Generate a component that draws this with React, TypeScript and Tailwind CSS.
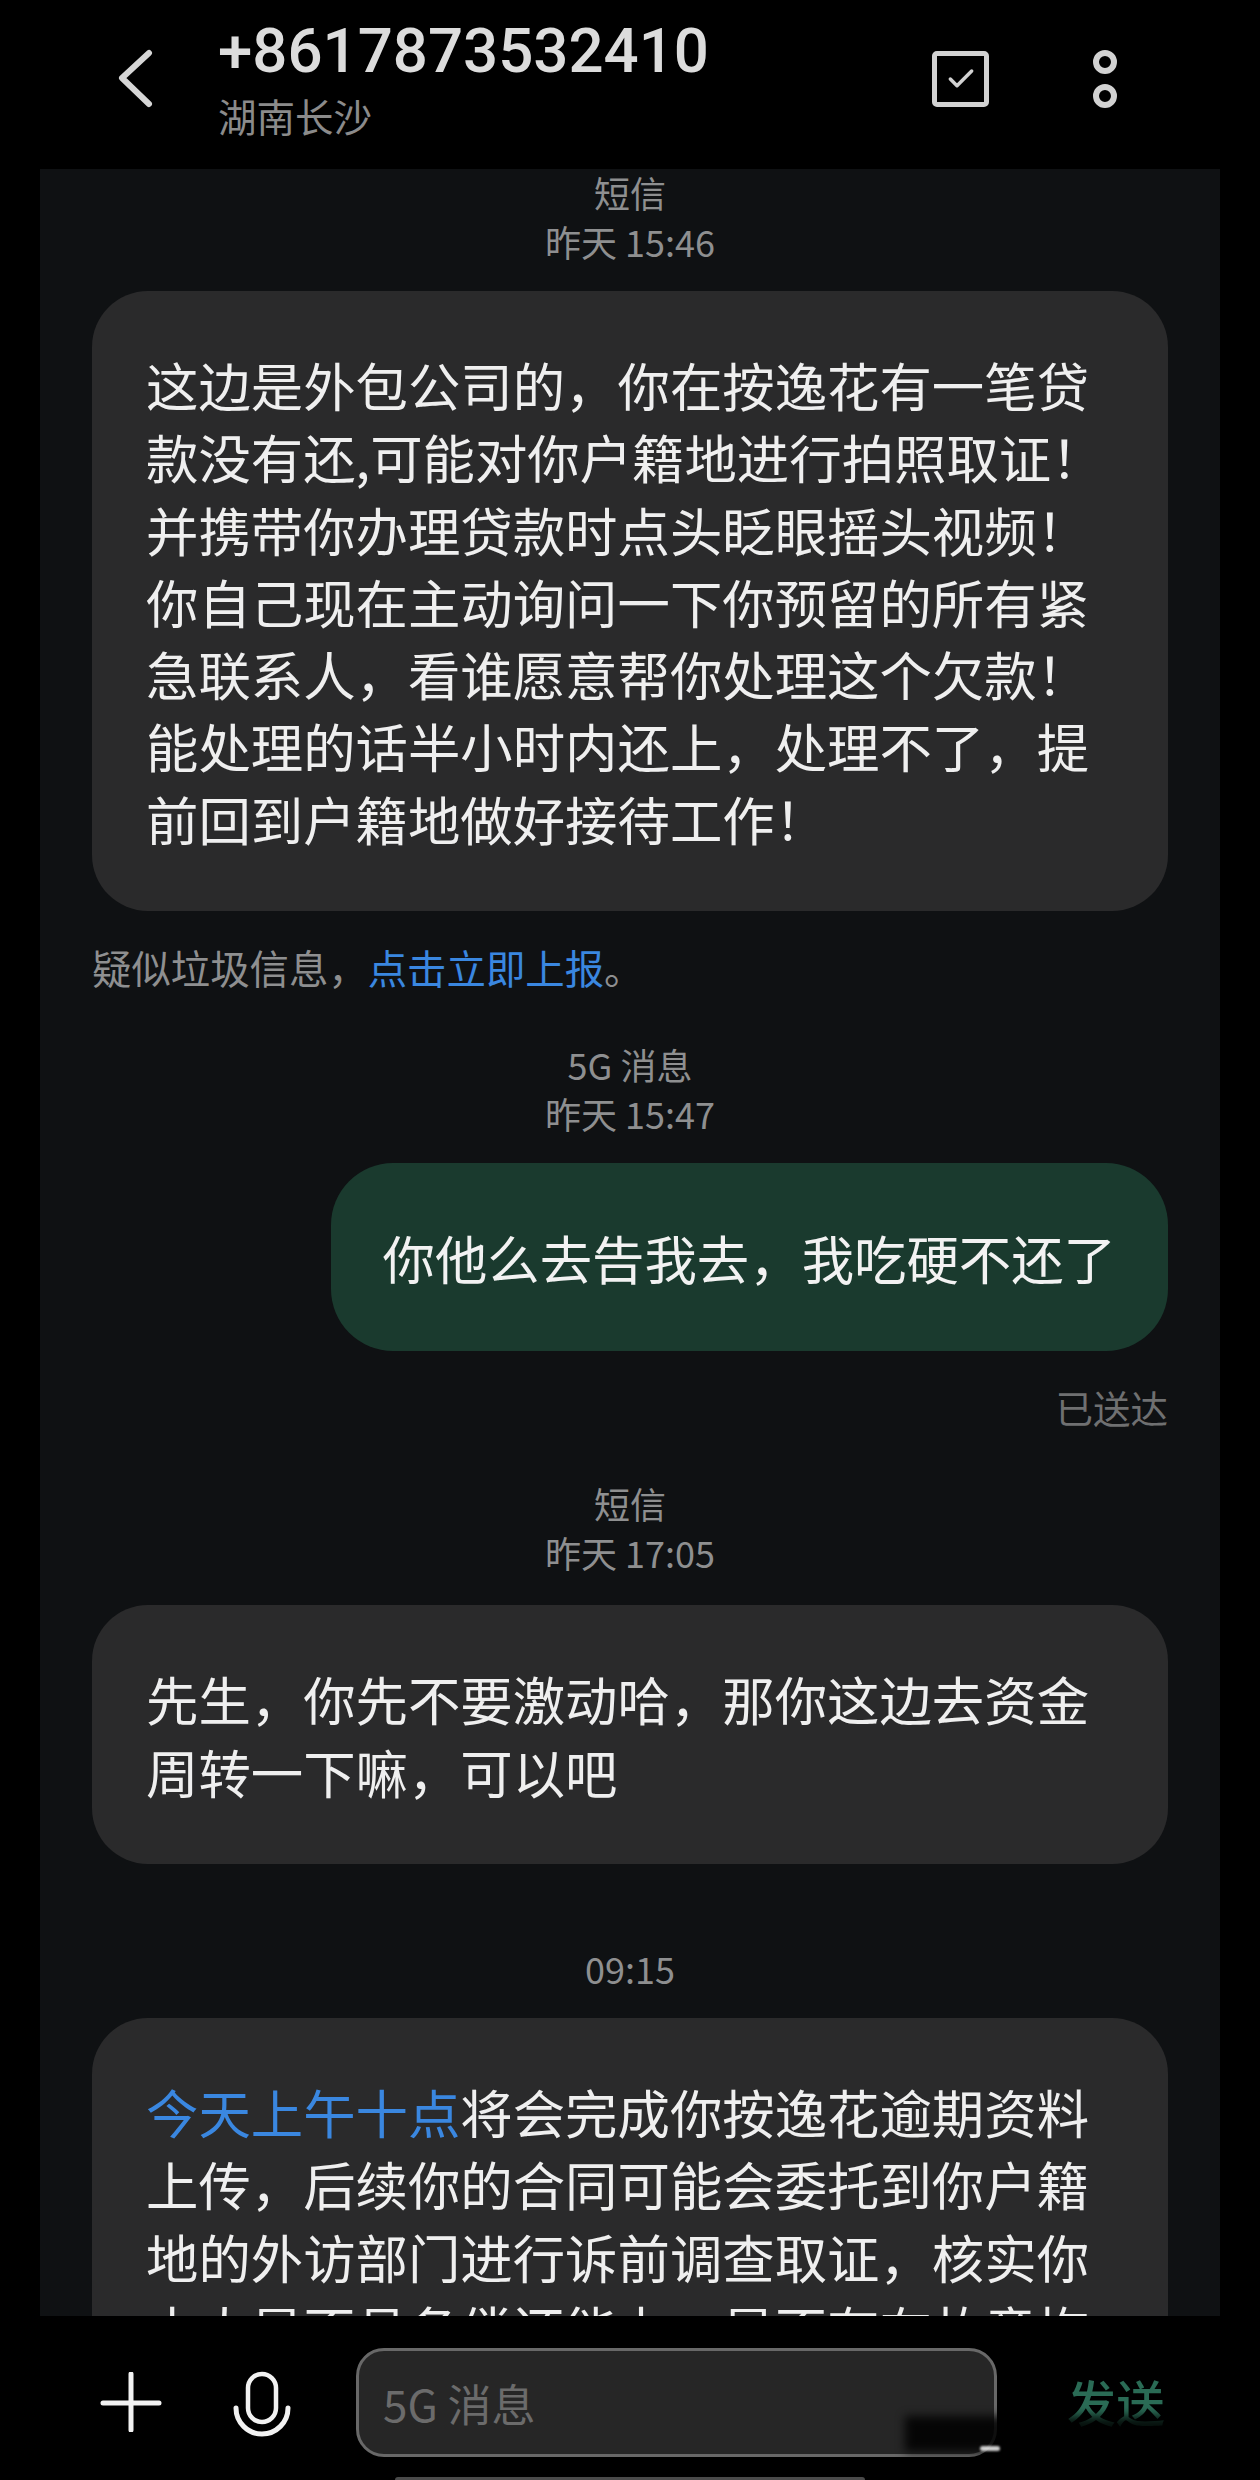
import { Check } from "lucide-react";

const bodyFont = "font-['Noto_Sans_CJK_SC','Noto_Sans',sans-serif]";

type BubbleProps = {
  lines: React.ReactNode[];
};

const MetaLabel = ({ children }: { children: React.ReactNode }) => {
  return <div className="pb-[3px] text-center text-[36px] leading-[46px] text-[#8e8f90]">{children}</div>;
};

const IncomingBubble = ({ lines }: BubbleProps) => {
  return (
    <div className="rounded-[56px] bg-[#2a2a2b] px-[54px] py-[57px] text-[52.4px] leading-[72.3px] text-[#efefef]">
      {lines.map((line, index) => (
        <div key={index} className="whitespace-nowrap">
          {line}
        </div>
      ))}
    </div>
  );
};

const firstMessage = [
  "这边是外包公司的，你在按逸花有一笔贷",
  "款没有还,可能对你户籍地进行拍照取证！",
  "并携带你办理贷款时点头眨眼摇头视频！",
  "你自己现在主动询问一下你预留的所有紧",
  "急联系人，看谁愿意帮你处理这个欠款！",
  "能处理的话半小时内还上，处理不了，提",
  "前回到户籍地做好接待工作！",
];

const secondMessage = ["先生，你先不要激动哈，那你这边去资金", "周转一下嘛，可以吧"];

const thirdMessage = [
  <>
    <span className="text-[#3a87e0]">今天上午十点</span>将会完成你按逸花逾期资料
  </>,
  "上传，后续你的合同可能会委托到你户籍",
  "地的外访部门进行诉前调查取证，核实你",
  "本人是否具备偿还能力，是否存在故意拖",
];

export default function App() {
  return (
    <div className={`flex h-[2480px] w-[1260px] flex-col overflow-hidden bg-black ${bodyFont}`}>
      <header className="flex h-[169px] shrink-0 items-start">
        <svg className="ml-[116px] mt-[48px] h-[60px] w-[40px]" viewBox="0 0 40 60" fill="none">
          <path d="M33 5 L6 30 L33 56" stroke="#d6d6d6" strokeWidth="6" strokeLinecap="round" strokeLinejoin="round" />
        </svg>
        <div className="ml-[62px] min-w-0 flex-1">
          <div className="mt-[13px] font-['Roboto',sans-serif] text-[61.8px] font-medium leading-[76px] text-[#dcdcdc]">
            +8617873532410
          </div>
          <div className="mt-[1px] text-[38.5px] leading-[50px] text-[#8b8b8b]">湖南长沙</div>
        </div>
        <div className="mt-[51px] flex h-[56px] w-[57px] items-center justify-center rounded-[5px] border-[5px] border-[#d2d2d2]">
          <Check className="h-[32px] w-[32px] text-[#d2d2d2]" strokeWidth={2.6} />
        </div>
        <div className="ml-[104px] mr-[143px] mt-[50px] flex w-[24px] flex-col gap-[10px]">
          <div className="h-[24px] w-[24px] rounded-full border-[6px] border-[#d2d2d2]" />
          <div className="h-[24px] w-[24px] rounded-full border-[6px] border-[#d2d2d2]" />
        </div>
      </header>

      <main className="mx-[40px] h-[2147px] shrink-0 overflow-hidden bg-[#0f1113] px-[52px]">
        <MetaLabel>短信</MetaLabel>
        <MetaLabel>昨天 15:46</MetaLabel>
        <div className="mt-[24px]">
          <IncomingBubble lines={firstMessage} />
        </div>
        <p className="mt-[31px] text-[39.4px] leading-[49px] text-[#8e8f90]">
          疑似垃圾信息，<span className="text-[#3a87e0]">点击立即上报</span>。
        </p>

        <div className="mt-[50px]">
          <MetaLabel>5G 消息</MetaLabel>
          <MetaLabel>昨天 15:47</MetaLabel>
        </div>
        <div className="mt-[24px] flex justify-end">
          <div className="rounded-[62px] bg-[#1a3a2e] px-[52px] py-[58px] text-[52.4px] leading-[72.3px] whitespace-nowrap text-[#f2f2f2]">
            你他么去告我去，我吃硬不还了
          </div>
        </div>
        <div className="mt-[31px] text-right text-[37.5px] leading-[49px] text-[#6f7071]">已送达</div>

        <div className="mt-[49px]">
          <MetaLabel>短信</MetaLabel>
          <MetaLabel>昨天 17:05</MetaLabel>
        </div>
        <div className="mt-[27px]">
          <IncomingBubble lines={secondMessage} />
        </div>

        <div className="mt-[81px]">
          <MetaLabel>09:15</MetaLabel>
        </div>
        <div className="mt-[24px]">
          <IncomingBubble lines={thirdMessage} />
        </div>
      </main>

      <footer className="relative flex flex-1 items-start">
        <svg className="ml-[100px] mt-[56px] h-[60px] w-[62px]" viewBox="0 0 62 60" fill="none">
          <path d="M31 2 V58 M3 31 H59" stroke="#f2f2f2" strokeWidth="5" strokeLinecap="round" />
        </svg>
        <svg className="ml-[70px] mt-[54px] h-[70px] w-[60px]" viewBox="0 0 60 70" fill="none">
          <rect x="16" y="4" width="28" height="48" rx="14" stroke="#f2f2f2" strokeWidth="4.5" />
          <path d="M4 38 A26 26 0 0 0 56 38" stroke="#f2f2f2" strokeWidth="5" strokeLinecap="round" />
        </svg>
        <div className="ml-[64px] mt-[32px] flex h-[109px] w-[641px] items-center rounded-[28px] border-[3px] border-[#686868] bg-[#262626] pl-[24px] text-[44px] text-[#6b6b6b]">
          5G 消息
        </div>
        <div className="ml-[70px] mt-[55px] text-[49px] leading-[60px] font-medium text-[#2a6b55]">发送</div>
        {/* dark smear across the lower right corner of the bar */}
        <div className="absolute top-[100px] left-[905px] h-[36px] w-[355px] bg-black/85 blur-[5px]" />
        <div className="absolute top-[130px] left-[980px] h-[5px] w-[20px] rounded-full bg-white/80 blur-[1px]" />
        <div className="absolute bottom-0 left-[395px] h-[3px] w-[470px] rounded-t bg-[#4a4a4a]" />
      </footer>
    </div>
  );
}
